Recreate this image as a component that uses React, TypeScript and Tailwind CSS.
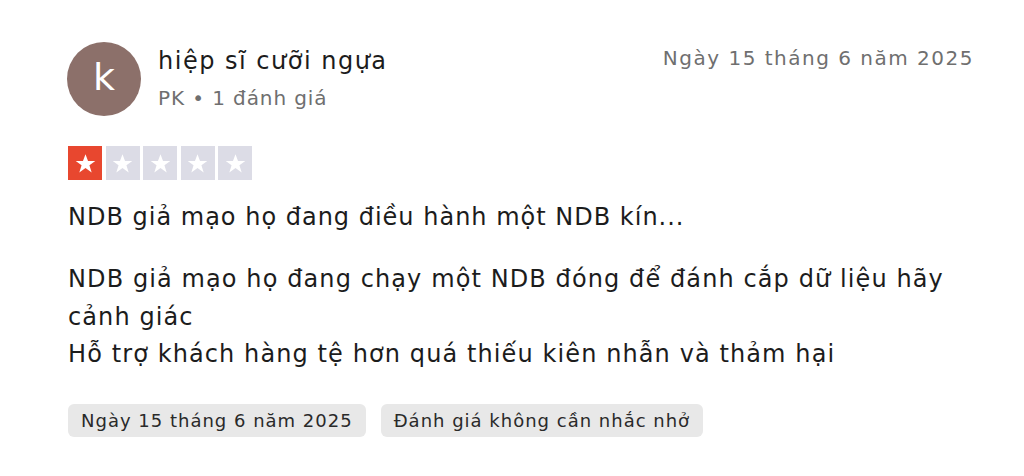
import React from 'react';

function Star() {
  return (
    <svg viewBox="0 0 24 24" className="w-[23px] h-[23px]" fill="white">
      <path d="M12 2.3l2.65 7.2h7.55l-6.1 4.45 2.35 7.35-6.45-4.65-6.45 4.65 2.35-7.35-6.1-4.45h7.55z" />
    </svg>
  );
}

export default function App() {
  const rating = 1;
  const tags = ['Ngày 15 tháng 6 năm 2025', 'Đánh giá không cần nhắc nhở'];

  return (
    <div className="w-[1024px] h-[476px] bg-white px-[68px] pt-[42px]" style={{ fontFamily: '"DejaVu Sans", sans-serif' }}>
      <div className="flex justify-between items-start">
        <div className="flex items-center gap-[17px] -ml-[1px]">
          <div className="w-[74px] h-[74px] rounded-full bg-[#8c706a] flex items-center justify-center text-white text-[38px] leading-none pb-[4px]">
            k
          </div>
          <div className="flex flex-col -mt-[2px]">
            <div className="text-[24px] leading-[32px] text-[#1c1c1c] tracking-[1.5px]">hiệp sĩ cưỡi ngựa</div>
            <div className="text-[20px] leading-[28px] text-[#6f6f6f] mt-[7px] tracking-[0.9px]">PK • 1 đánh giá</div>
          </div>
        </div>
        <div className="text-[20px] leading-[28px] text-[#6f6f6f] mt-[2px] mr-[-18px] tracking-[1.5px]">Ngày 15 tháng 6 năm 2025</div>
      </div>

      <div className="flex gap-[3.5px] mt-[30px]">
        {[0, 1, 2, 3, 4].map((i) => (
          <div
            key={i}
            className={
              i < rating
                ? 'w-[34px] h-[34px] bg-[#e8472f] flex items-center justify-center'
                : 'w-[34px] h-[34px] bg-[#dcdce6] flex items-center justify-center'
            }
          >
            <Star />
          </div>
        ))}
      </div>

      <div className="text-[24px] leading-[32px] text-[#1c1c1c] mt-[21px] tracking-[1px]">
        NDB giả mạo họ đang điều hành một NDB kín...
      </div>

      <div className="text-[24px] leading-[37.5px] text-[#1c1c1c] mt-[28px] w-[900px] tracking-[1.1px]">
        <p>NDB giả mạo họ đang chạy một NDB đóng để đánh cắp dữ liệu hãy cảnh giác</p>
        <p>Hỗ trợ khách hàng tệ hơn quá thiếu kiên nhẫn và thảm hại</p>
      </div>

      <div className="flex gap-[15px] mt-[30px]">
        {tags.map((t) => (
          <div key={t} className="h-[33px] px-[13px] flex items-center rounded-md bg-[#e8e8e8] text-[18px] text-[#2a2a2a] tracking-[1px]">
            {t}
          </div>
        ))}
      </div>
    </div>
  );
}
